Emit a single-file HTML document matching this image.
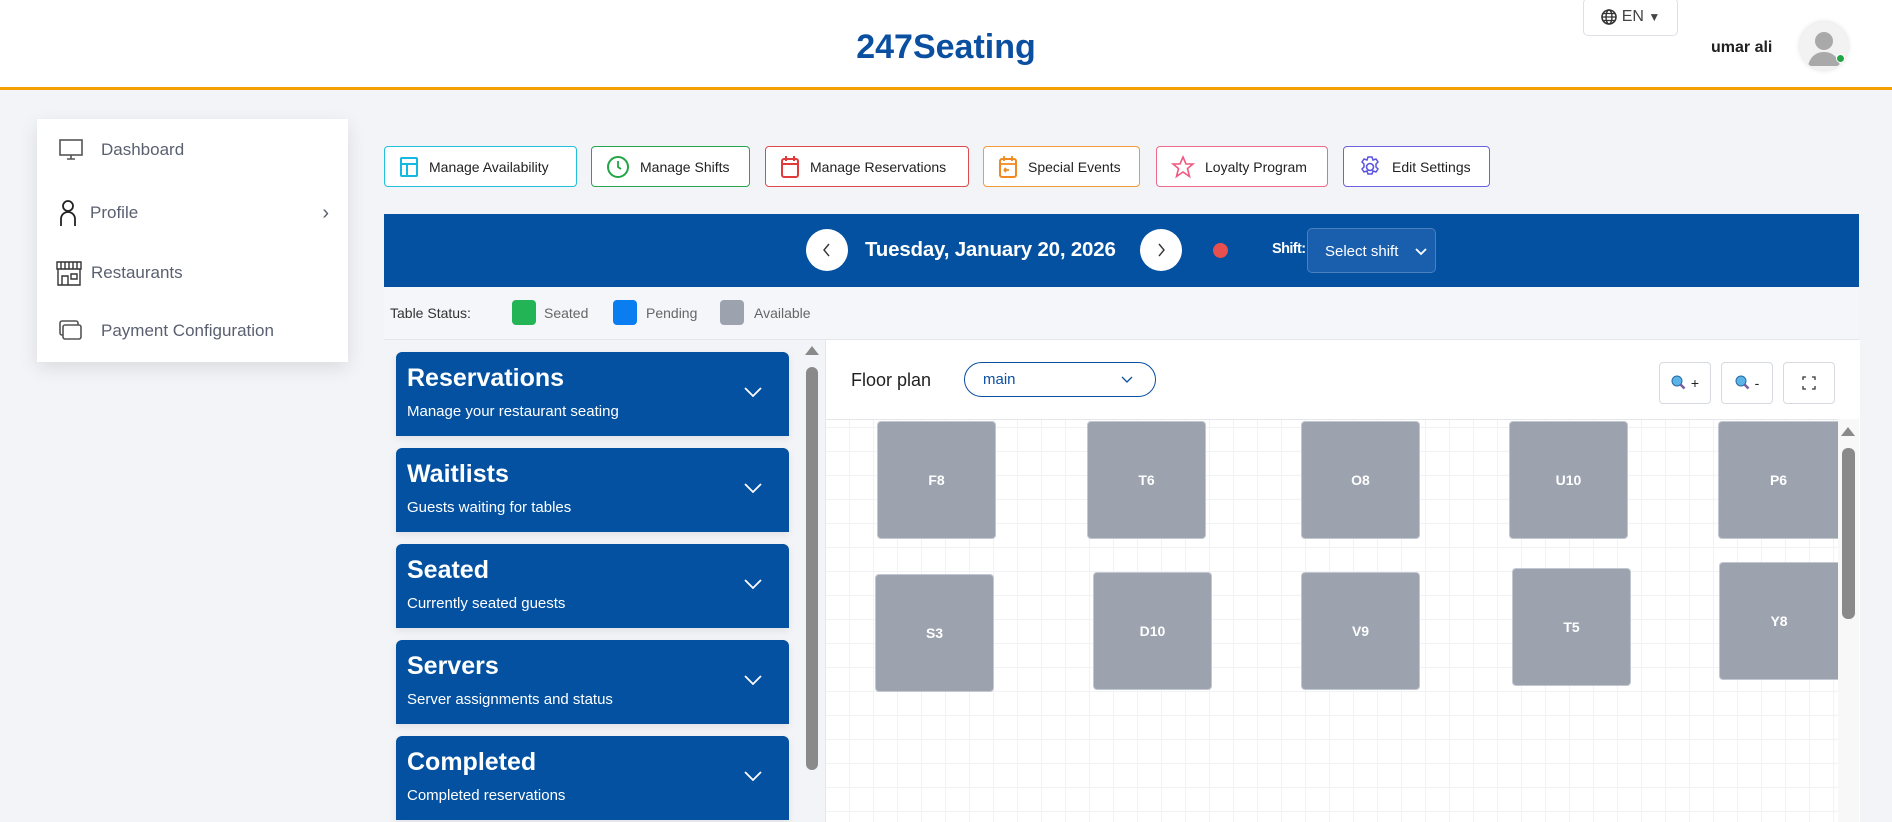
<!DOCTYPE html>
<html><head><meta charset="utf-8"><style>
*{box-sizing:border-box;margin:0;padding:0}
body{width:1892px;height:822px;overflow:hidden;background:#f3f4f8;font-family:"Liberation Sans",sans-serif;position:relative;color:#222}
.abs{position:absolute}
.hdr{left:0;top:0;width:1892px;height:90px;background:#fff;border-bottom:3px solid #f5a000}
.title{left:0;width:1892px;top:28px;text-align:center;font-size:34px;font-weight:bold;color:#0a4fa0}
.side{left:37px;top:119px;width:311px;height:243px;background:#fff;box-shadow:0 6px 18px rgba(0,0,0,.10)}
.si{position:absolute;left:22px;font-size:17px;color:#5a6070;display:flex;align-items:center}
.btn{top:146px;height:41px;background:#fff;border:1px solid;border-radius:4px;display:flex;align-items:center;font-size:14px;color:#222;padding-left:14px}
.btn svg{margin-right:10px}
.bar{left:384px;top:214px;width:1475px;height:73px;background:#0351a0}
.circ{width:42px;height:42px;border-radius:50%;background:#fff;display:flex;align-items:center;justify-content:center}
.card{left:396px;width:393px;height:84px;background:#0351a0;border-radius:6px 6px 0 0;color:#fff;box-shadow:0 3px 8px rgba(0,0,0,.08)}
.card b{position:absolute;left:11px;top:12px;font-size:25px}
.card span{position:absolute;left:11px;top:51px;font-size:15px}
.card svg{position:absolute;left:347px;top:34px}
.tb{width:119px;height:118px;background:#9ca3af;border:1px solid #c3c8d0;border-radius:4px;color:#fff;font-weight:bold;font-size:14px;display:flex;align-items:center;justify-content:center}
.zb{top:362px;width:52px;height:42px;border:1px solid #d6dae0;border-radius:4px;background:#fff;display:flex;align-items:center;justify-content:center;font-size:14px}
</style></head><body>
<div class="abs hdr"></div>
<div class="abs title">247Seating</div>
<div class="abs" style="left:1583px;top:-2px;width:95px;height:38px;border:1px solid #dde0e4;border-radius:5px;background:#fff;display:flex;align-items:center;justify-content:center;font-size:16px;color:#444">
<svg width="16" height="16" viewBox="0 0 16 16" style="margin-right:5px"><circle cx="8" cy="8" r="7" fill="none" stroke="#333" stroke-width="1.6"/><ellipse cx="8" cy="8" rx="3" ry="7" fill="none" stroke="#333" stroke-width="1.4"/><path d="M1 8h14M2 4.5h12M2 11.5h12" stroke="#333" stroke-width="1.2"/></svg>EN&nbsp;<span style="font-size:12px">▼</span></div>
<div class="abs" style="left:1711px;top:39px;font-size:16px;font-weight:bold;color:#222">umar ali</div>
<div class="abs" style="left:1800px;top:22px;width:48px;height:48px;border-radius:50%;background:#f2f2f2;box-shadow:0 0 6px rgba(0,0,0,.15);overflow:hidden">
<svg width="48" height="48" viewBox="0 0 48 48"><circle cx="24" cy="19" r="9" fill="#a9a9a9"/><path d="M8 44c2-10 9-14 16-14s14 4 16 14z" fill="#a9a9a9"/></svg></div>
<div class="abs" style="left:1836px;top:54px;width:9px;height:9px;border-radius:50%;background:#22a447;border:1px solid #fff"></div>

<div class="abs side">
<div class="si" style="top:20px"><svg width="24" height="22" viewBox="0 0 24 22" style="margin-right:18px"><rect x="1" y="1" width="22" height="15" fill="none" stroke="#555" stroke-width="1.6"/><path d="M12 16v4M8 20h8" stroke="#555" stroke-width="1.6"/></svg>Dashboard</div>
<div class="si" style="top:81px;width:270px"><svg width="18" height="26" viewBox="0 0 18 26" style="margin-right:13px"><circle cx="9" cy="6" r="5" fill="none" stroke="#222" stroke-width="1.8"/><path d="M2 26v-7a7 7 0 0 1 14 0v7" fill="none" stroke="#222" stroke-width="1.8"/></svg>Profile<span style="position:absolute;right:0;font-size:20px">›</span></div>
<div class="si" style="top:141px;left:18px"><svg width="28" height="26" viewBox="0 0 28 26" style="margin-right:8px"><path d="M2 2h24v7H2zM6 2v7M10 2v7M14 2v7M18 2v7M22 2v7M3 9v16h22V9M7 25v-9h6v9M16 14h6v5h-6z" fill="none" stroke="#333" stroke-width="1.4"/></svg>Restaurants</div>
<div class="si" style="top:201px"><svg width="24" height="22" viewBox="0 0 24 22" style="margin-right:18px"><rect x="1" y="1" width="18" height="14" rx="2" fill="none" stroke="#555" stroke-width="1.6"/><rect x="4" y="5" width="18" height="14" rx="2" fill="#fff" stroke="#555" stroke-width="1.6"/></svg>Payment Configuration</div>
</div>

<div class="abs btn" style="left:384px;width:193px;border-color:#22c0dc"><svg width="20" height="22" viewBox="0 0 20 22"><rect x="2" y="2" width="16" height="18" rx="1" fill="none" stroke="#14b8e0" stroke-width="2"/><path d="M2 8h16M8 8v12" stroke="#14b8e0" stroke-width="2"/></svg>Manage Availability</div>
<div class="abs btn" style="left:591px;width:159px;border-color:#2aa44f"><svg width="24" height="24" viewBox="0 0 24 24"><circle cx="12" cy="12" r="10" fill="none" stroke="#22a447" stroke-width="2"/><path d="M12 6v6l3 2" fill="none" stroke="#22a447" stroke-width="1.8"/></svg>Manage Shifts</div>
<div class="abs btn" style="left:765px;width:204px;border-color:#e04a4a"><svg width="20" height="24" viewBox="0 0 20 24"><rect x="2" y="4" width="16" height="18" rx="2" fill="none" stroke="#e03a3a" stroke-width="2"/><path d="M2 9h16M6 1v5M14 1v5" stroke="#e03a3a" stroke-width="2"/></svg>Manage Reservations</div>
<div class="abs btn" style="left:983px;width:157px;border-color:#f39a3a"><svg width="20" height="24" viewBox="0 0 20 24"><rect x="2" y="4" width="16" height="18" rx="2" fill="none" stroke="#f08a20" stroke-width="2"/><path d="M2 9h16M6 1v5M14 1v5M6 15h5M6 15l2-2M6 15l2 2" stroke="#f08a20" stroke-width="1.8"/></svg>Special Events</div>
<div class="abs btn" style="left:1156px;width:172px;border-color:#ee6a8a"><svg width="24" height="24" viewBox="0 0 24 24"><path d="M12 2l3 7h7l-5.5 4.5 2 8L12 17l-6.5 4.5 2-8L2 9h7z" fill="none" stroke="#ee5a80" stroke-width="1.6"/></svg>Loyalty Program</div>
<div class="abs btn" style="left:1343px;width:147px;border-color:#6a62e0"><svg width="24" height="24" viewBox="0 0 24 24"><circle cx="12" cy="12" r="3.5" fill="none" stroke="#5a52e0" stroke-width="1.6"/><path d="M10 2h4l1 3 3-1 2 3-2 2 0 3 2 2-2 3-3-1-1 3h-4l-1-3-3 1-2-3 2-2v-3l-2-2 2-3 3 1z" fill="none" stroke="#5a52e0" stroke-width="1.5"/></svg>Edit Settings</div>

<div class="abs bar"></div>
<div class="abs circ" style="left:806px;top:229px"><svg width="12" height="16" viewBox="0 0 12 16"><path d="M8 2L3 8l5 6" fill="none" stroke="#333" stroke-width="1.4"/></svg></div>
<div class="abs" style="left:865px;top:238px;font-size:20.5px;font-weight:bold;color:#fff;letter-spacing:-0.2px">Tuesday, January 20, 2026</div>
<div class="abs circ" style="left:1140px;top:229px"><svg width="12" height="16" viewBox="0 0 12 16"><path d="M4 2l5 6-5 6" fill="none" stroke="#333" stroke-width="1.4"/></svg></div>
<div class="abs" style="left:1213px;top:243px;width:15px;height:15px;border-radius:50%;background:#e85050"></div>
<div class="abs" style="left:1272px;top:241px;font-size:14.5px;font-weight:bold;color:#fff;letter-spacing:-0.6px">Shift:</div>
<div class="abs" style="left:1307px;top:228px;width:129px;height:45px;border:1px solid #4a7fc0;border-radius:5px;background:#1a5fad;color:#fff;font-size:15px;padding:14px 0 0 17px">Select shift<svg width="12" height="8" viewBox="0 0 12 8" style="position:absolute;right:8px;top:19px"><path d="M1 1l5 5 5-5" fill="none" stroke="#fff" stroke-width="1.8"/></svg></div>

<div class="abs" style="left:384px;top:287px;width:1475px;height:53px;background:#f5f6fa;border-bottom:1px solid #e4e6ea"></div>
<div class="abs" style="left:390px;top:305px;font-size:14px;color:#333">Table Status:</div>
<div class="abs" style="left:512px;top:300px;width:24px;height:25px;border-radius:4px;background:#22b455"></div>
<div class="abs" style="left:544px;top:305px;font-size:14px;color:#666">Seated</div>
<div class="abs" style="left:613px;top:300px;width:24px;height:25px;border-radius:4px;background:#0a7ef0"></div>
<div class="abs" style="left:646px;top:305px;font-size:14px;color:#666">Pending</div>
<div class="abs" style="left:720px;top:300px;width:24px;height:25px;border-radius:4px;background:#9ca3af"></div>
<div class="abs" style="left:754px;top:305px;font-size:14px;color:#666">Available</div>

<div class="abs card" style="top:352px"><b>Reservations</b><span>Manage your restaurant seating</span><svg width="20" height="12" viewBox="0 0 20 12"><path d="M2 2l8 8 8-8" fill="none" stroke="#fff" stroke-width="1.8"/></svg></div>
<div class="abs card" style="top:448px"><b>Waitlists</b><span>Guests waiting for tables</span><svg width="20" height="12" viewBox="0 0 20 12"><path d="M2 2l8 8 8-8" fill="none" stroke="#fff" stroke-width="1.8"/></svg></div>
<div class="abs card" style="top:544px"><b>Seated</b><span>Currently seated guests</span><svg width="20" height="12" viewBox="0 0 20 12"><path d="M2 2l8 8 8-8" fill="none" stroke="#fff" stroke-width="1.8"/></svg></div>
<div class="abs card" style="top:640px"><b>Servers</b><span>Server assignments and status</span><svg width="20" height="12" viewBox="0 0 20 12"><path d="M2 2l8 8 8-8" fill="none" stroke="#fff" stroke-width="1.8"/></svg></div>
<div class="abs card" style="top:736px"><b>Completed</b><span>Completed reservations</span><svg width="20" height="12" viewBox="0 0 20 12"><path d="M2 2l8 8 8-8" fill="none" stroke="#fff" stroke-width="1.8"/></svg></div>
<div class="abs" style="left:805px;top:346px;width:0;height:0;border-left:7px solid transparent;border-right:7px solid transparent;border-bottom:9px solid #8a8a8a"></div>
<div class="abs" style="left:806px;top:367px;width:12px;height:403px;border-radius:6px;background:#8a8a8a"></div>

<div class="abs" style="left:825px;top:340px;width:1035px;height:482px;background:#fff;border-left:1px solid #e6e8ec"></div>
<div class="abs" style="left:826px;top:419px;width:1012px;height:403px;border-top:1px solid #e4e6ea;background-color:#fff;background-image:linear-gradient(#f1f2f6 1px,transparent 1px),linear-gradient(90deg,#f1f2f6 1px,transparent 1px);background-size:24px 24px;background-position:-1px 7px"></div>
<div class="abs" style="left:851px;top:370px;font-size:18px;color:#222">Floor plan</div>
<div class="abs" style="left:964px;top:362px;width:192px;height:35px;border:1.5px solid #0a4fa0;border-radius:18px;color:#0a4fa0;font-size:15px;padding:8px 0 0 18px">main<svg width="12" height="8" viewBox="0 0 12 8" style="position:absolute;right:22px;top:13px"><path d="M1 1l5 5 5-5" fill="none" stroke="#0a4fa0" stroke-width="1.3"/></svg></div>
<div class="abs zb" style="left:1659px"><svg width="16" height="16" viewBox="0 0 16 16"><circle cx="6" cy="6" r="5" fill="#5ab4e8" stroke="#2a6aa0"/><path d="M9.5 9.5l4 4" stroke="#7a5aa0" stroke-width="2.5"/></svg>&nbsp;+</div>
<div class="abs zb" style="left:1721px"><svg width="16" height="16" viewBox="0 0 16 16"><circle cx="6" cy="6" r="5" fill="#5ab4e8" stroke="#2a6aa0"/><path d="M9.5 9.5l4 4" stroke="#7a5aa0" stroke-width="2.5"/></svg>&nbsp;-</div>
<div class="abs zb" style="left:1783px"><svg width="14" height="14" viewBox="0 0 14 14"><path d="M1 4V1h3M10 1h3v3M13 10v3h-3M4 13H1v-3" fill="none" stroke="#333" stroke-width="1.3"/></svg></div>

<div class="abs tb" style="left:877px;top:421px">F8</div>
<div class="abs tb" style="left:1087px;top:421px">T6</div>
<div class="abs tb" style="left:1301px;top:421px">O8</div>
<div class="abs tb" style="left:1509px;top:421px">U10</div>
<div class="abs tb" style="left:1718px;top:421px;width:120px;border-right:none;border-radius:4px 0 0 4px">P6</div>
<div class="abs tb" style="left:875px;top:574px">S3</div>
<div class="abs tb" style="left:1093px;top:572px">D10</div>
<div class="abs tb" style="left:1301px;top:572px">V9</div>
<div class="abs tb" style="left:1512px;top:568px">T5</div>
<div class="abs tb" style="left:1719px;top:562px;width:119px;border-right:none;border-radius:4px 0 0 4px">Y8</div>
<div class="abs" style="left:1838px;top:419px;width:21px;height:403px;background:#f8f8f8"></div>
<div class="abs" style="left:1841px;top:427px;width:0;height:0;border-left:7px solid transparent;border-right:7px solid transparent;border-bottom:9px solid #8a8a8a"></div>
<div class="abs" style="left:1842px;top:448px;width:13px;height:171px;border-radius:6px;background:#8a8a8a"></div>
</body></html>
